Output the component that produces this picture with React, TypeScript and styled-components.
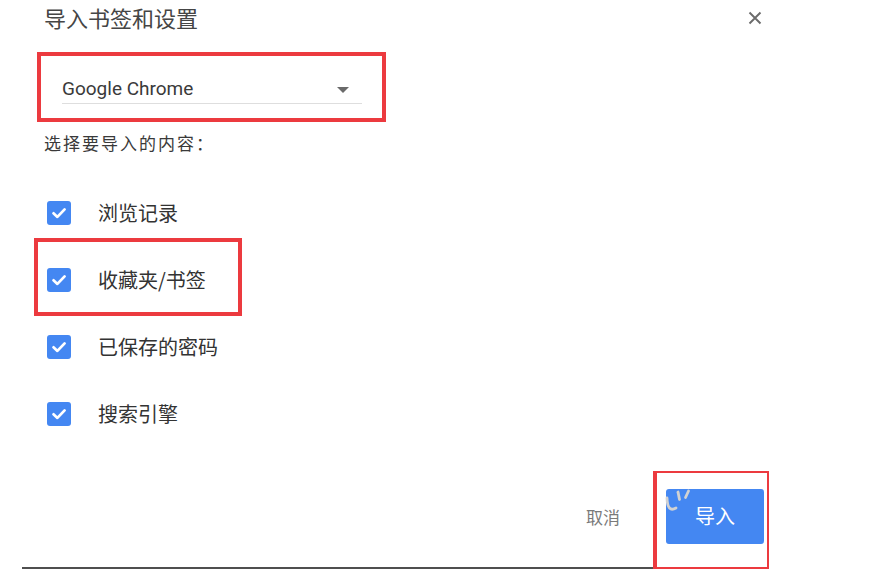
import React from "react";
import styled, { createGlobalStyle, css } from "styled-components";

const GlobalStyle = createGlobalStyle`
  html, body { margin: 0; padding: 0; background: #ffffff; }
  body { font-family: "Noto Sans CJK SC", "Noto Sans", sans-serif; }
  *, *::before, *::after { box-sizing: border-box; }
`;

const RED = "#ec3a3f";
const BLUE = "#4487f2";

const Dialog = styled.div`
  width: 869px;
  height: 581px;
  overflow: hidden;
  padding-left: 44px;
  display: flex;
  flex-direction: column;
  background: #fff;
`;

const Header = styled.header`
  display: flex;
  align-items: center;
  justify-content: space-between;
  height: 35px;
  padding-right: 107px;
`;

const Title = styled.h1`
  margin: 0;
  font-size: 22px;
  font-weight: 400;
  line-height: 35px;
  color: #454545;
  font-family: "Noto Sans CJK SC", sans-serif;
`;

const CloseButton = styled.button`
  width: 14px;
  height: 14px;
  padding: 0;
  border: none;
  background: transparent;
  display: flex;
  align-items: center;
  justify-content: center;
  cursor: pointer;
`;

const HighlightFrame = styled.div`
  border: 4px solid ${RED};
`;

const SelectFrame = styled(HighlightFrame)`
  margin-top: 17px;
  margin-left: -7px;
  width: 349px;
  padding: 18px 20px 14px 21px;
`;

const SelectField = styled.div`
  display: flex;
  align-items: center;
  justify-content: space-between;
  height: 30px;
  border-bottom: 1px solid #dedede;
`;

const SelectValue = styled.span`
  font-family: Roboto, "Liberation Sans", sans-serif;
  font-size: 19px;
  color: #3a3a3a;
`;

const Caret = styled.span`
  width: 0;
  height: 0;
  margin-right: 13px;
  margin-top: 2px;
  border-left: 6px solid transparent;
  border-right: 6px solid transparent;
  border-top: 6px solid #6a6a6a;
`;

const SectionLabel = styled.div`
  margin-top: 6px;
  font-size: 17px;
  letter-spacing: 2px;
  line-height: 30px;
  color: #3a3a3a;
`;

const OptionList = styled.ul`
  list-style: none;
  margin: 21px 0 0 3px;
  padding: 0;
  display: flex;
  flex-direction: column;
`;

const OptionRow = styled.li<{ $highlighted?: boolean }>`
  position: relative;
  height: 67px;
  display: flex;
  align-items: center;
  gap: 27px;
  ${(p) =>
    p.$highlighted &&
    css`
      &::after {
        content: "";
        position: absolute;
        top: -8px;
        bottom: -3px;
        left: -13px;
        width: 208px;
        border: 4px solid ${RED};
        pointer-events: none;
      }
    `}
`;

const CheckBox = styled.span`
  width: 24px;
  height: 24px;
  border-radius: 3px;
  background: ${BLUE};
  display: flex;
  align-items: center;
  justify-content: center;
  flex: none;
`;

const OptionText = styled.span`
  font-size: 20px;
  line-height: 1;
  color: #333;
`;

const Footer = styled.footer`
  margin-top: 24px;
  margin-left: -22px;
  padding-right: 100px;
  height: 98px;
  display: flex;
  align-items: stretch;
`;

const FooterRule = styled.div`
  flex: 1;
  border-bottom: 2px solid #4f4f4f;
  display: flex;
  align-items: center;
  justify-content: flex-end;
  padding-right: 33px;
  padding-bottom: 6px;
`;

const CancelText = styled.span`
  font-size: 17px;
  color: #7a7a7a;
`;

const ButtonFrame = styled.div`
  position: relative;
  border: 2px solid ${RED};
  border-left-width: 4px;
  padding: 16px 3px 23px 9px;
`;

const PrimaryButton = styled.button`
  width: 98px;
  height: 55px;
  border: none;
  border-radius: 3px;
  background: ${BLUE};
  color: #fff;
  font-size: 20px;
  font-family: "Noto Sans CJK SC", sans-serif;
  padding: 0 0 3px 0;
  cursor: pointer;
`;

const SpinnerMarks = styled.svg`
  position: absolute;
  left: 7px;
  top: 15px;
  pointer-events: none;
`;

const Check = () => (
  <svg width="18" height="18" viewBox="0 0 18 18" fill="none">
    <path
      d="M3.5 9.3 L7.4 12.9 L14.6 5.4"
      stroke="#fff"
      strokeWidth="2.7"
      strokeLinecap="round"
      strokeLinejoin="round"
    />
  </svg>
);

const options = [
  { label: "浏览记录" },
  { label: "收藏夹/书签", highlighted: true },
  { label: "已保存的密码" },
  { label: "搜索引擎" },
];

export default function App() {
  return (
    <>
      <GlobalStyle />
      <Dialog>
        <Header>
          <Title>导入书签和设置</Title>
          <CloseButton aria-label="关闭">
            <svg width="14" height="14" viewBox="0 0 14 14">
              <path
                d="M1.5 1.5 L12.5 12.5 M12.5 1.5 L1.5 12.5"
                stroke="#6b6b6b"
                strokeWidth="1.9"
              />
            </svg>
          </CloseButton>
        </Header>

        <SelectFrame>
          <SelectField>
            <SelectValue>Google Chrome</SelectValue>
            <Caret />
          </SelectField>
        </SelectFrame>

        <SectionLabel>选择要导入的内容：</SectionLabel>

        <OptionList>
          {options.map((o) => (
            <OptionRow key={o.label} $highlighted={o.highlighted}>
              <CheckBox>
                <Check />
              </CheckBox>
              <OptionText>{o.label}</OptionText>
            </OptionRow>
          ))}
        </OptionList>

        <Footer>
          <FooterRule>
            <CancelText>取消</CancelText>
          </FooterRule>
          <ButtonFrame>
            <PrimaryButton>导入</PrimaryButton>
            <SpinnerMarks width="34" height="32" viewBox="0 0 34 32" fill="none">
              <path
                d="M3 10 Q3.5 25 12 20"
                stroke="#d2d2d2"
                strokeWidth="2.8"
                strokeLinecap="round"
              />
              <path d="M14 4 L15.5 11.5" stroke="#d2d2d2" strokeWidth="2.8" strokeLinecap="round" />
              <path d="M24.5 3 L21.5 9.5" stroke="#d2d2d2" strokeWidth="2.8" strokeLinecap="round" />
            </SpinnerMarks>
          </ButtonFrame>
        </Footer>
      </Dialog>
    </>
  );
}
